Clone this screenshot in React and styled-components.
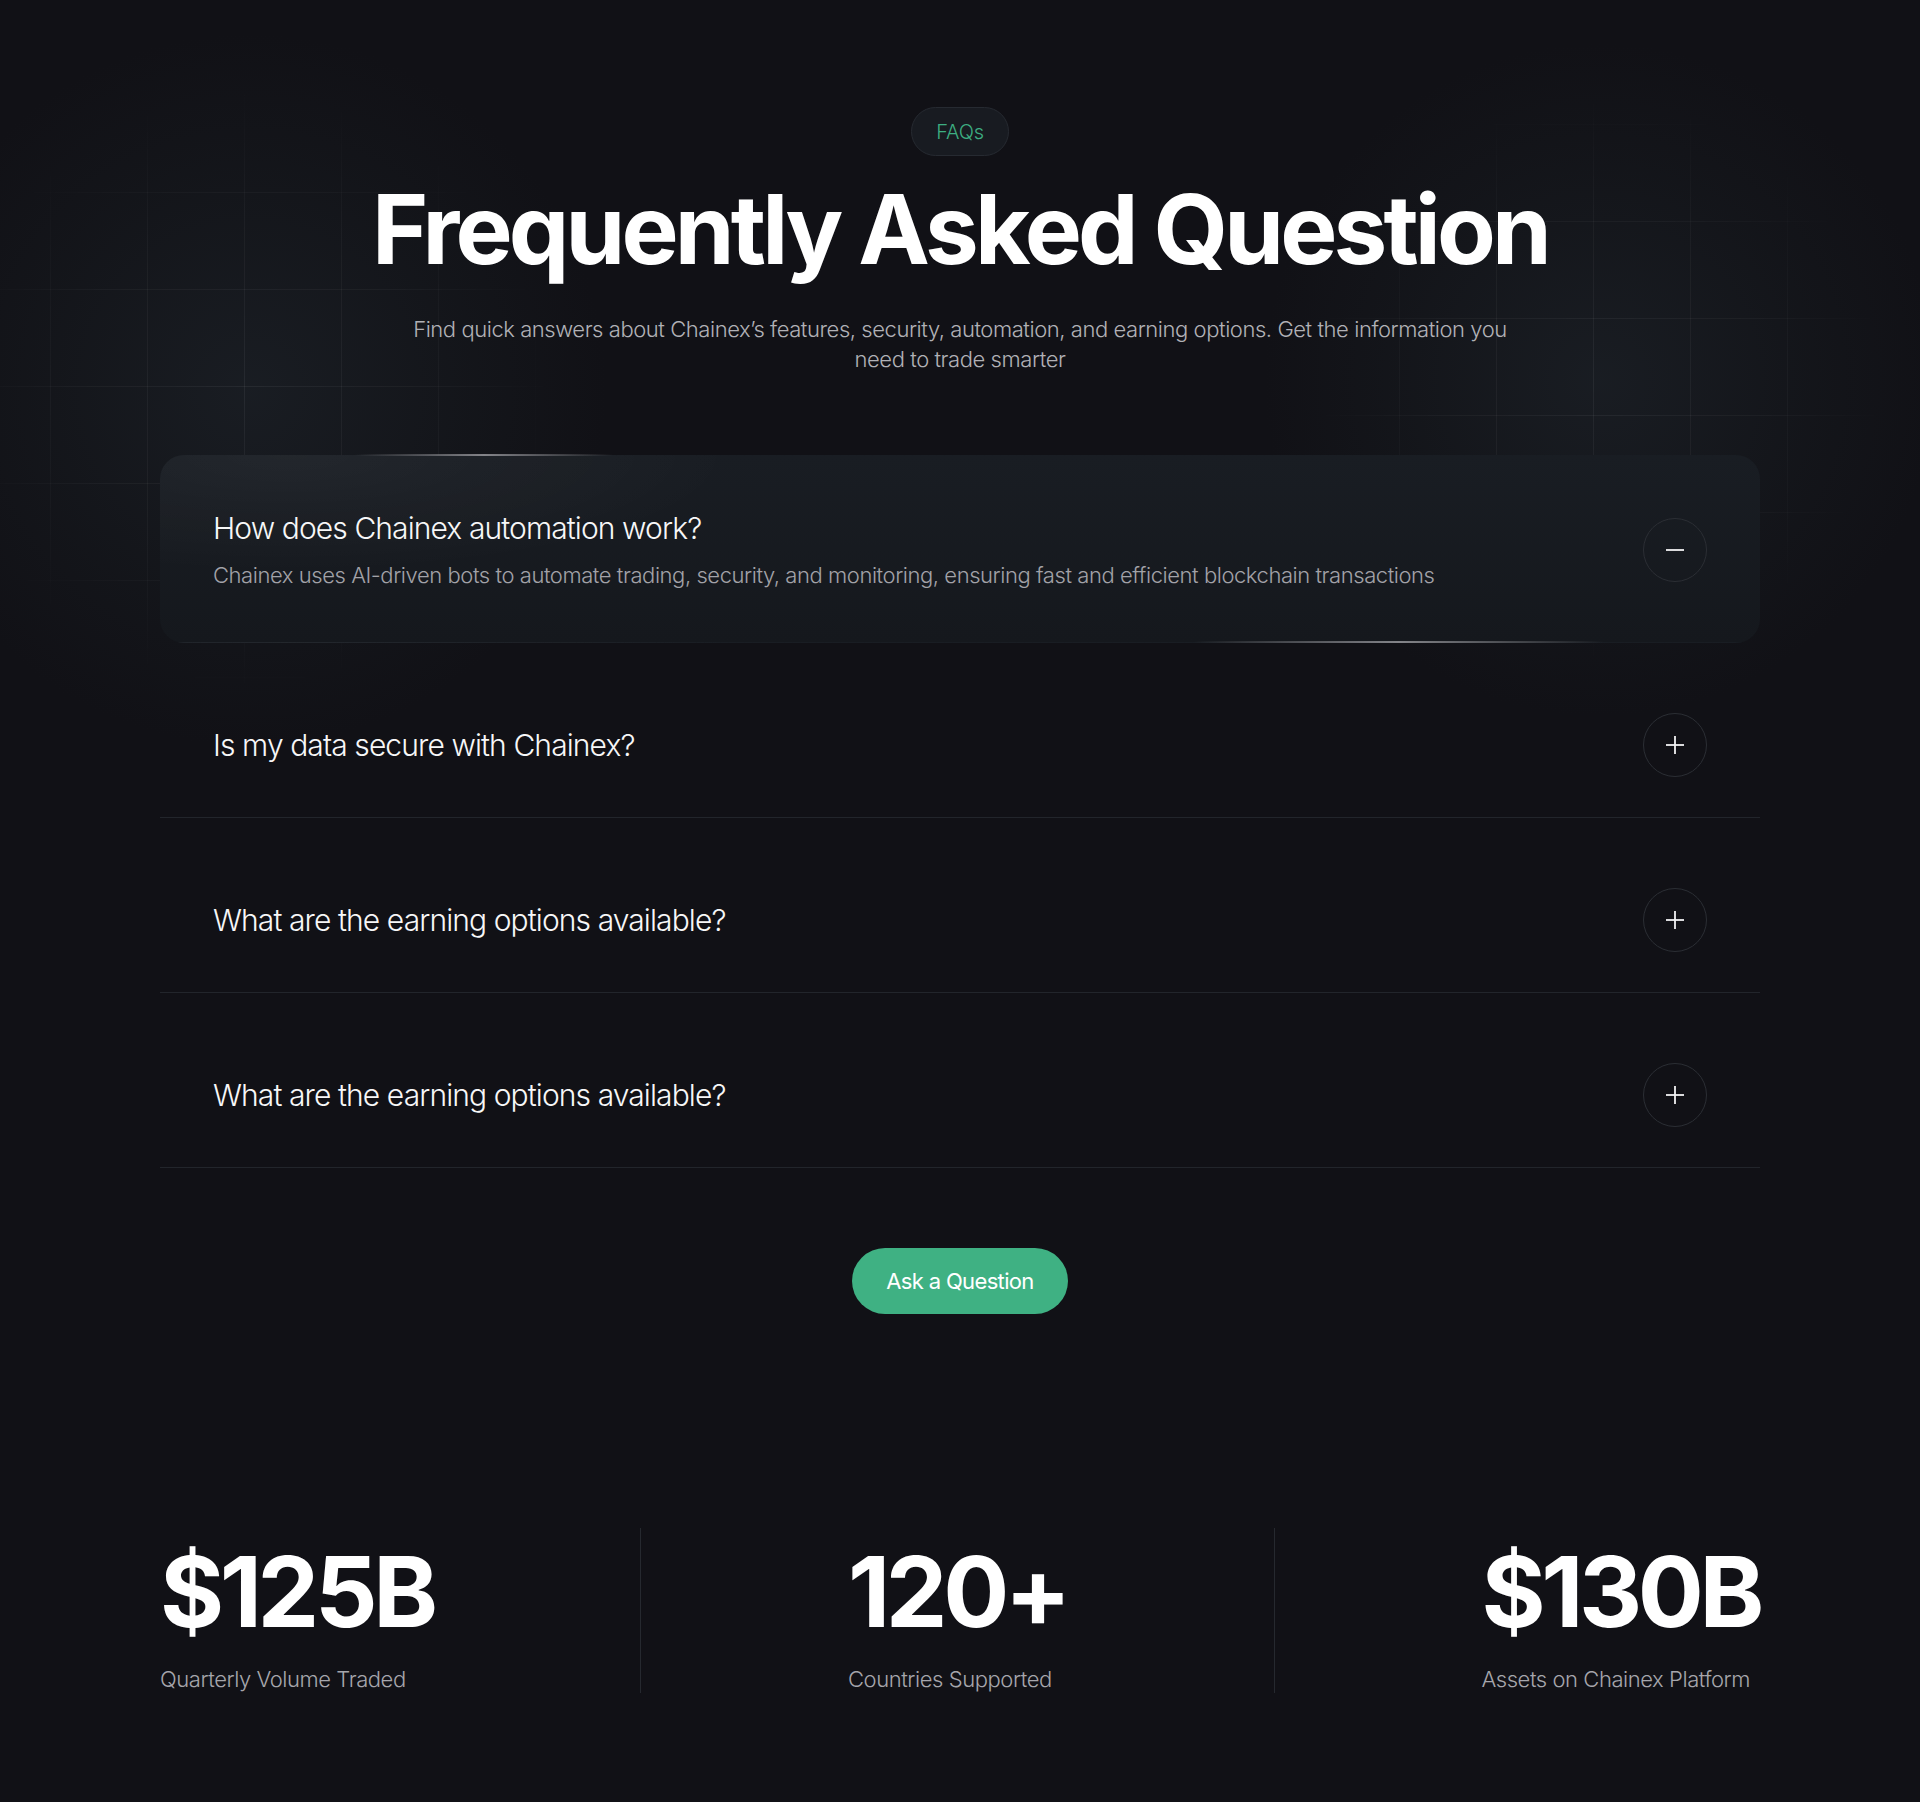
import React from 'react';
import styled, { createGlobalStyle } from 'styled-components';

const GRID = 97;

const GlobalStyle = createGlobalStyle`
  html, body {
    margin: 0;
    padding: 0;
    background: #111116;
  }
  body {
    font-family: Inter, "Noto Sans", sans-serif;
    color: #f4f4f5;
    -webkit-font-smoothing: antialiased;
  }
`;

const Page = styled.section`
  position: relative;
  overflow: hidden;
  width: 1920px;
  min-height: 1802px;
  box-sizing: border-box;
  padding: 107px 160px 107px;
  background: #111116;
  display: flex;
  flex-direction: column;
  align-items: center;
`;

const Backdrop = styled.div`
  position: absolute;
  inset: 0;
  pointer-events: none;
`;

const gridOffset = (line, origin) => (((line - origin) % GRID) + GRID) % GRID;

// soft glow with a faint line grid fading out towards its edge
const GridGlow = styled.div`
  position: absolute;
  left: ${(p) => p.$x - p.$r}px;
  top: ${(p) => p.$y - p.$r}px;
  width: ${(p) => p.$r * 2}px;
  height: ${(p) => p.$r * 2}px;
  border-radius: 50%;
  background: radial-gradient(circle, rgba(26, 30, 36, 0.9) 0%, rgba(22, 25, 30, 0.55) 42%, rgba(17, 17, 22, 0) 70%);

  &::after {
    content: '';
    position: absolute;
    inset: 0;
    background-image:
      linear-gradient(rgba(255, 255, 255, 0.06) 1px, transparent 1px),
      linear-gradient(90deg, rgba(255, 255, 255, 0.06) 1px, transparent 1px);
    background-size: ${GRID}px ${GRID}px;
    background-position: ${(p) => gridOffset(p.$gx, p.$x - p.$r)}px ${(p) => gridOffset(p.$gy, p.$y - p.$r)}px;
    -webkit-mask-image: radial-gradient(circle, #000 0%, rgba(0, 0, 0, 0.6) 35%, transparent 62%);
    mask-image: radial-gradient(circle, #000 0%, rgba(0, 0, 0, 0.6) 35%, transparent 62%);
  }
`;

const Header = styled.header`
  position: relative;
  display: flex;
  flex-direction: column;
  align-items: center;
  text-align: center;
`;

const Pill = styled.span`
  box-sizing: border-box;
  height: 49px;
  display: inline-flex;
  align-items: center;
  padding: 0 24px;
  border-radius: 999px;
  border: 1px solid #262a31;
  background: #181b21;
  color: #3dae82;
  font-size: 20px;
  font-weight: 300;
  letter-spacing: -0.01em;
`;

const Title = styled.h1`
  margin: 21px 0 0;
  font-size: 96px;
  line-height: 1.1;
  font-weight: 700;
  letter-spacing: -0.04em;
  color: #ffffff;
`;

const Lead = styled.p`
  margin: 31px 0 0;
  max-width: 1110px;
  font-size: 22px;
  line-height: 30px;
  font-weight: 300;
  letter-spacing: -0.02em;
  color: #b1b1b6;
`;

const FaqList = styled.div`
  position: relative;
  width: 1600px;
  margin-top: 81px;
  display: flex;
  flex-direction: column;
  gap: 30px;
`;

const FaqItem = styled.div`
  position: relative;
  display: flex;
  align-items: center;
  gap: 40px;
  padding: ${(p) => (p.$open ? '55px 53px 51px' : '40px 53px')};
  border-radius: ${(p) => (p.$open ? '24px' : '0')};
  border-bottom: 1px solid ${(p) => (p.$open ? 'transparent' : '#22252b')};
  background: ${(p) =>
    p.$open
      ? 'radial-gradient(ellipse 40% 90% at 8% 0%, rgba(255,255,255,0.045), transparent 70%), linear-gradient(180deg, #191d23 0%, #15181d 100%)'
      : 'transparent'};

  &::before,
  &::after {
    content: '';
    position: absolute;
    height: 2px;
    display: ${(p) => (p.$open ? 'block' : 'none')};
    background: linear-gradient(90deg, rgba(140, 140, 145, 0), rgba(150, 150, 155, 0.85) 50%, rgba(140, 140, 145, 0));
  }
  &::before {
    top: -1px;
    left: 195px;
    width: 258px;
  }
  &::after {
    bottom: -1px;
    left: 1034px;
    width: 410px;
  }
`;

const FaqText = styled.div`
  flex: 1;
  display: flex;
  flex-direction: column;
  gap: 14px;
`;

const Question = styled.h3`
  margin: 0;
  font-size: 30px;
  line-height: 36px;
  font-weight: 300;
  letter-spacing: -0.03em;
  color: #f7f7f8;
`;

const Answer = styled.p`
  margin: 0;
  font-size: 22px;
  line-height: 31px;
  font-weight: 300;
  letter-spacing: -0.02em;
  color: #a2a2a8;
`;

const ToggleButton = styled.button`
  flex: 0 0 auto;
  width: 64px;
  height: 64px;
  padding: 0;
  display: flex;
  align-items: center;
  justify-content: center;
  border-radius: 50%;
  border: 1px solid #2b2e34;
  background: transparent;
  color: #f2f2f3;
  cursor: pointer;
  &:focus {
    outline: none;
  }
`;

const AskButton = styled.button`
  margin-top: 80px;
  height: 66px;
  padding: 0 34px;
  border: none;
  border-radius: 999px;
  background: #3fb183;
  color: #ffffff;
  font-family: Inter, sans-serif;
  font-size: 22px;
  font-weight: 400;
  letter-spacing: -0.03em;
  cursor: pointer;
`;

const Stats = styled.div`
  width: 1600px;
  margin-top: 214px;
  display: flex;
  justify-content: space-between;
  align-items: stretch;
`;

const Stat = styled.div`
  display: flex;
  flex-direction: column;
`;

const StatValue = styled.span`
  font-size: 98px;
  line-height: 1.3;
  font-weight: 700;
  letter-spacing: -0.045em;
  color: #ffffff;
`;

const StatLabel = styled.span`
  margin-top: 9px;
  font-size: 22px;
  line-height: 30px;
  font-weight: 300;
  letter-spacing: -0.02em;
  color: #a6a6ac;
`;

const StatDivider = styled.div`
  width: 1px;
  height: 165px;
  background: #26292f;
`;

const ToggleIcon = ({ open }) => (
  <svg width="20" height="20" viewBox="0 0 20 20" fill="none" stroke="currentColor" strokeWidth="1.8" strokeLinecap="butt">
    <line x1="1" y1="10" x2="19" y2="10" />
    {!open && <line x1="10" y1="1" x2="10" y2="19" />}
  </svg>
);

const faqs = [
  {
    q: 'How does Chainex automation work?',
    a: 'Chainex uses AI-driven bots to automate trading, security, and monitoring, ensuring fast and efficient blockchain transactions',
    open: true,
  },
  { q: 'Is my data secure with Chainex?' },
  { q: 'What are the earning options available?' },
  { q: 'What are the earning options available?' },
];

const stats = [
  { value: '$125B', label: 'Quarterly Volume Traded' },
  { value: '120+', label: 'Countries Supported' },
  { value: '$130B', label: 'Assets on Chainex Platform' },
];

export default function App() {
  return (
    <>
      <GlobalStyle />
      <Page>
        <Backdrop>
          <GridGlow $x={250} $y={390} $r={360} $gx={147} $gy={289} />
          <GridGlow $x={1600} $y={380} $r={340} $gx={1496} $gy={318} />
        </Backdrop>

        <Header>
          <Pill>FAQs</Pill>
          <Title>Frequently Asked Question</Title>
          <Lead>
            Find quick answers about Chainex’s features, security, automation, and earning options. Get the information you
            need to trade smarter
          </Lead>
        </Header>

        <FaqList>
          {faqs.map((item, i) => (
            <FaqItem key={i} $open={item.open}>
              <FaqText>
                <Question>{item.q}</Question>
                {item.open && <Answer>{item.a}</Answer>}
              </FaqText>
              <ToggleButton aria-label={item.open ? 'Collapse' : 'Expand'}>
                <ToggleIcon open={item.open} />
              </ToggleButton>
            </FaqItem>
          ))}
        </FaqList>

        <AskButton>Ask a Question</AskButton>

        <Stats>
          {stats.map((s, i) => (
            <React.Fragment key={s.label}>
              {i > 0 && <StatDivider />}
              <Stat>
                <StatValue>{s.value}</StatValue>
                <StatLabel>{s.label}</StatLabel>
              </Stat>
            </React.Fragment>
          ))}
        </Stats>
      </Page>
    </>
  );
}
